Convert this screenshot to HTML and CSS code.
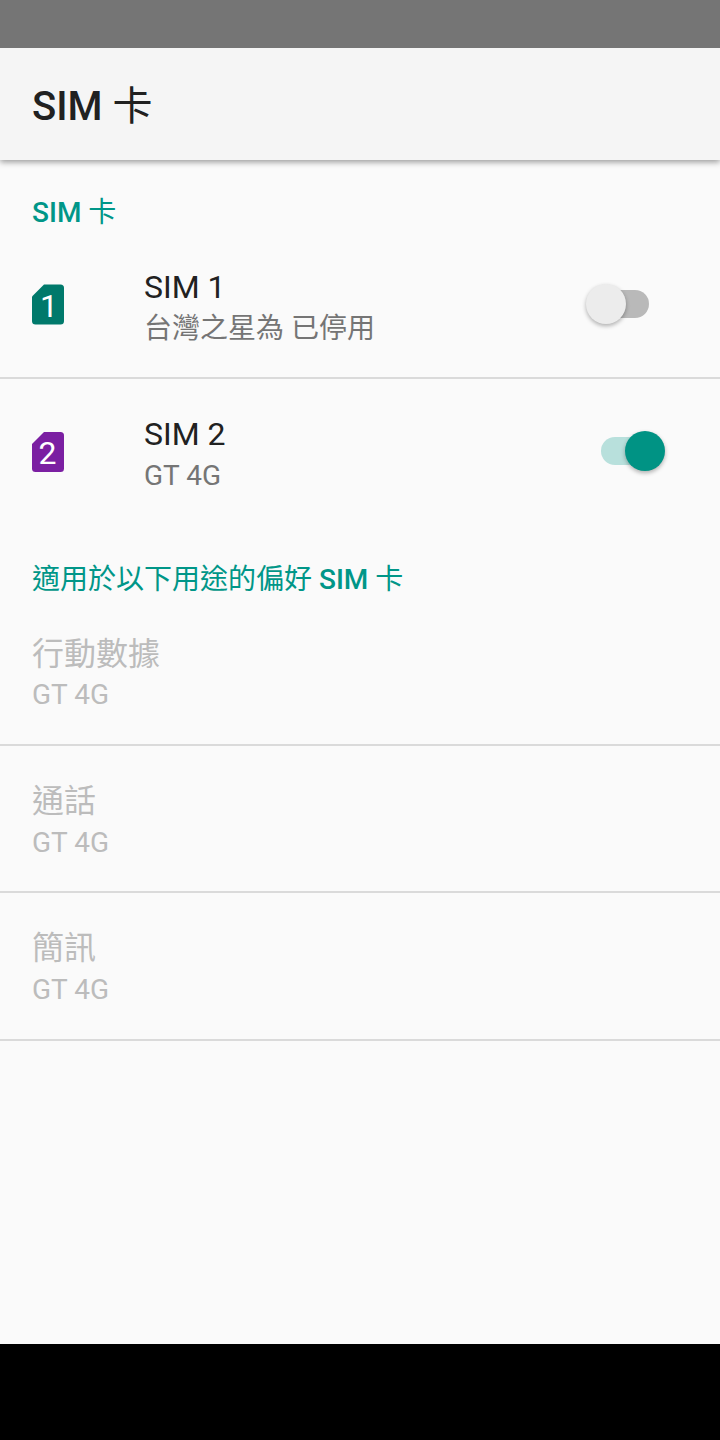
FILE: index.html
```html
<!DOCTYPE html>
<html lang="zh-Hant">
<head>
<meta charset="utf-8">
<title>SIM 卡</title>
<link rel="stylesheet" href="styles.css">
</head>
<body>
<div class="screen">
  <div class="status-bar"></div>
  <header class="app-bar"><h1>SIM <span class="han">卡</span></h1></header>
  <main class="content">
    <h2 class="category">SIM <span class="han">卡</span></h2>
    <div class="row sim">
      <svg class="sim-icon" width="32" height="41" viewBox="0 0 32 41"><path fill="#00796b" d="M12 .5H28.500Q32 .5 32 4V37Q32 40.500 28.500 40.500H3.500Q0 40.500 0 37V12.500Z"/><text x="17" y="32.500" class="sim-number">1</text></svg>
      <div class="labels"><div class="title">SIM 1</div><div class="summary">台灣之星為 已停用</div></div>
      <div class="switch"><span class="thumb"></span></div>
    </div>
    <div class="row sim last">
      <svg class="sim-icon" width="32" height="41" viewBox="0 0 32 41"><path fill="#7b1fa2" d="M12 1H28.500Q32 1 32 4.500V37.500Q32 41 28.500 41H3.500Q0 41 0 37.500V13Z"/><text x="15.500" y="32.500" class="sim-number">2</text></svg>
      <div class="labels"><div class="title">SIM 2</div><div class="summary">GT 4G</div></div>
      <div class="switch on"><span class="thumb"></span></div>
    </div>
    <h2 class="category preferred"><span class="han">適用於以下用途的偏好</span> SIM <span class="han">卡</span></h2>
    <div class="row disabled data"><div class="labels"><div class="title">行動數據</div><div class="summary">GT 4G</div></div></div>
    <div class="row disabled"><div class="labels"><div class="title">通話</div><div class="summary">GT 4G</div></div></div>
    <div class="row disabled sms"><div class="labels"><div class="title">簡訊</div><div class="summary">GT 4G</div></div></div>
  </main>
  <div class="nav-bar"></div>
</div>
</body>
</html>
```
FILE: styles.css
```css
* { box-sizing: border-box; }
body { margin: 0; font-family: Roboto, "Noto Sans CJK TC", sans-serif; }
h1, h2 { margin: 0; font-weight: 500; }
.han { font-weight: 400; }
.screen { width: 720px; height: 1440px; display: flex; flex-direction: column; background: #fafafa; overflow: hidden; }
.status-bar { height: 48px; background: #757575; flex: none; }
.app-bar { height: 112px; flex: none; padding: 5px 0 0 32px; display: flex; align-items: center; background: #f5f5f5; box-shadow: 0 2px 6px rgba(0,0,0,.4); clip-path: inset(0 0 -12px 0); }
h1 { font-size: 40px; line-height: 48px; color: #212121; }
.content { flex: 1; display: flex; flex-direction: column; }
.category { height: 72px; flex: none; padding: 33px 32px 0; font-size: 28px; line-height: 40px; color: #009688; }
.preferred { height: 73px; padding-top: 34px; }
.row { height: 147px; flex: none; display: flex; align-items: center; padding: 0 32px; border-bottom: 2px solid #dadada; }
.sim.last { border-bottom-color: transparent; }
.sim-icon { flex: none; margin-right: 80px; }
.sim-number { font: 32px Roboto, sans-serif; fill: #fff; text-anchor: middle; }
.labels { flex: 1; padding-top: 6px; }
.title { font-size: 32px; line-height: 42px; color: #212121; }
.summary { font-size: 28px; line-height: 42px; color: #757575; }
.disabled .title, .disabled .summary { color: #bcbcbc; }
.data .summary { line-height: 40px; margin-bottom: 2px; }
.sms { height: 148px; padding-bottom: 1px; }
.switch { position: relative; width: 48px; height: 28px; margin: 0 39px 1px 0; border-radius: 14px; background: #b9b9b9; }
.switch.on { background: #b8e0dc; }
.thumb { position: absolute; left: -15.5px; top: -6px; width: 40px; height: 40px; border-radius: 50%; background: #ececec; box-shadow: 0 2px 4px rgba(0,0,0,.3); }
.on .thumb { left: 24px; background: #009384; }
.nav-bar { height: 96px; flex: none; background: #000; }
```
